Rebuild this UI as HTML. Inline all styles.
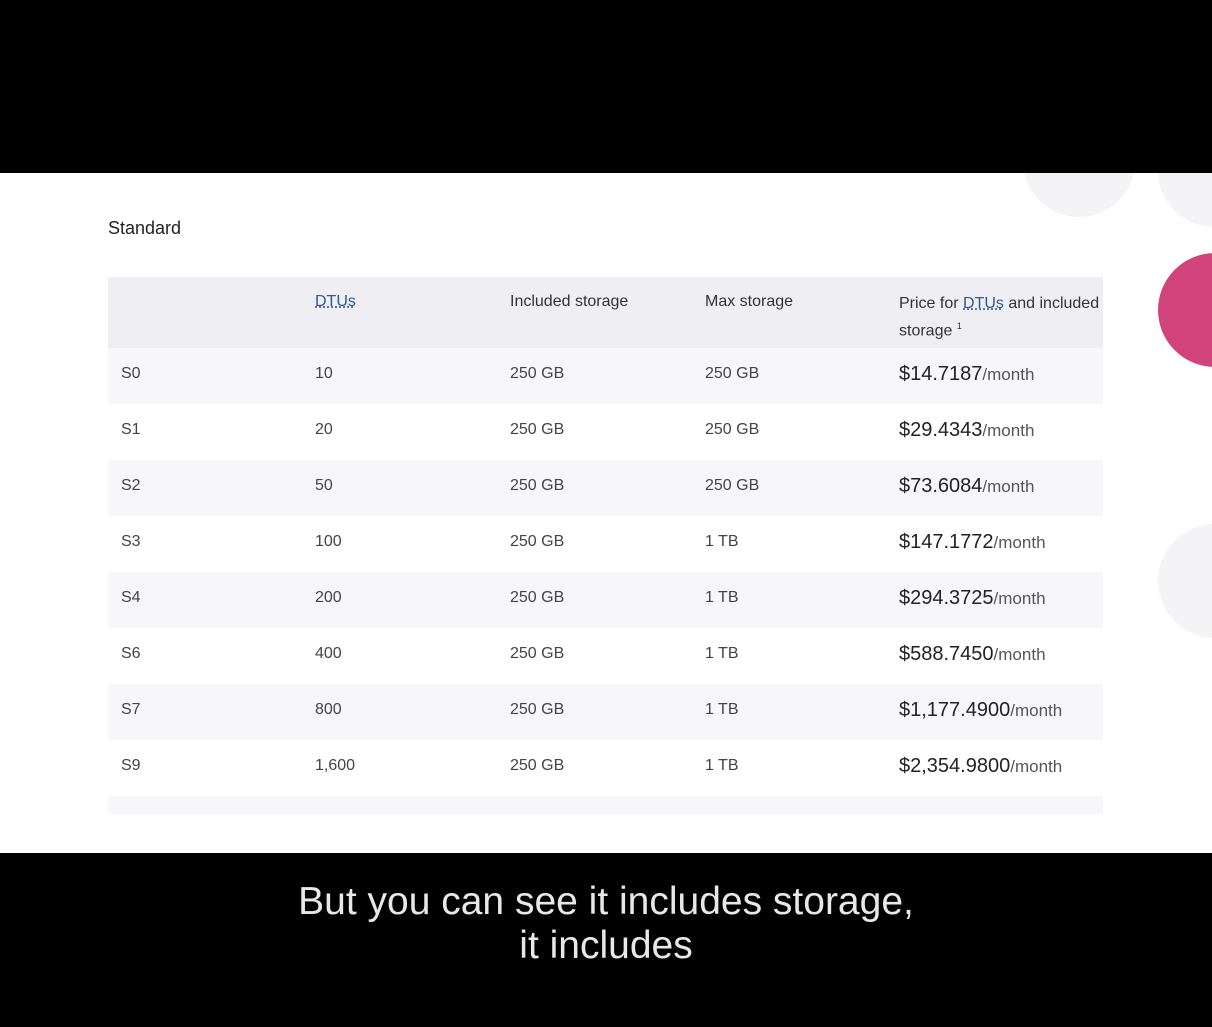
<!DOCTYPE html>
<html><head><style>
body{margin:0;width:1212px;height:1027px;background:#000;position:relative;overflow:hidden;font-family:"Liberation Sans",sans-serif;}
.w{position:absolute;left:0;top:173px;width:1212px;height:680px;background:#fff;overflow:hidden}
.c{position:absolute;border-radius:50%}
.h{position:absolute;left:108px;top:45px;font-size:18px;color:#222}
.r{position:absolute;left:108px;width:995px;height:56px;font-size:16px;color:#444;overflow:hidden}
.r span{position:absolute;top:17px}
.p{font-size:20px;color:#222;top:15px!important}
.p small{font-size:17px;color:#555}
.sub{position:absolute;top:880px;width:1212px;text-align:center;color:#e8e8e8;font-size:39px;line-height:44px}
a{color:#2a5a9a;text-decoration:underline dotted}
</style></head><body>
<div class="w">
<div class="c" style="left:1023px;top:-68px;width:112px;height:112px;background:#f4f3f6"></div>
<div class="c" style="left:1158px;top:-58px;width:112px;height:112px;background:#f4f3f6"></div>
<div class="c" style="left:1158px;top:80px;width:114px;height:114px;background:#d1437b"></div>
<div class="c" style="left:1158px;top:351px;width:114px;height:114px;background:#f4f3f6"></div>
<div class="h">Standard</div>
<div class="r" style="top:104px;height:71px;background:#efeef3;color:#333">
<span style="left:207px;top:16px"><a>DTUs</a></span>
<span style="left:402px;top:16px">Included storage</span>
<span style="left:597px;top:16px">Max storage</span>
<span style="left:791px;top:16px;line-height:22px;white-space:nowrap">Price for <a>DTUs</a> and included<br>storage <sup style="font-size:9px">1</sup></span>
</div>
<div class="r" style="top:175px;background:#f7f7fa"><span style="left:13px">S0</span><span style="left:207px">10</span><span style="left:402px">250 GB</span><span style="left:597px">250 GB</span><span class="p" style="left:791px">$14.7187<small>/month</small></span></div>
<div class="r" style="top:231px;background:#fff"><span style="left:13px">S1</span><span style="left:207px">20</span><span style="left:402px">250 GB</span><span style="left:597px">250 GB</span><span class="p" style="left:791px">$29.4343<small>/month</small></span></div>
<div class="r" style="top:287px;background:#f7f7fa"><span style="left:13px">S2</span><span style="left:207px">50</span><span style="left:402px">250 GB</span><span style="left:597px">250 GB</span><span class="p" style="left:791px">$73.6084<small>/month</small></span></div>
<div class="r" style="top:343px;background:#fff"><span style="left:13px">S3</span><span style="left:207px">100</span><span style="left:402px">250 GB</span><span style="left:597px">1 TB</span><span class="p" style="left:791px">$147.1772<small>/month</small></span></div>
<div class="r" style="top:399px;background:#f7f7fa"><span style="left:13px">S4</span><span style="left:207px">200</span><span style="left:402px">250 GB</span><span style="left:597px">1 TB</span><span class="p" style="left:791px">$294.3725<small>/month</small></span></div>
<div class="r" style="top:455px;background:#fff"><span style="left:13px">S6</span><span style="left:207px">400</span><span style="left:402px">250 GB</span><span style="left:597px">1 TB</span><span class="p" style="left:791px">$588.7450<small>/month</small></span></div>
<div class="r" style="top:511px;background:#f7f7fa"><span style="left:13px">S7</span><span style="left:207px">800</span><span style="left:402px">250 GB</span><span style="left:597px">1 TB</span><span class="p" style="left:791px">$1,177.4900<small>/month</small></span></div>
<div class="r" style="top:567px;background:#fff"><span style="left:13px">S9</span><span style="left:207px">1,600</span><span style="left:402px">250 GB</span><span style="left:597px">1 TB</span><span class="p" style="left:791px">$2,354.9800<small>/month</small></span></div>
<div class="r" style="top:623px;height:18px;background:#f7f7fa"></div>
</div>
<div class="sub">But you can see it includes storage,<br>it includes</div>
</body></html>
